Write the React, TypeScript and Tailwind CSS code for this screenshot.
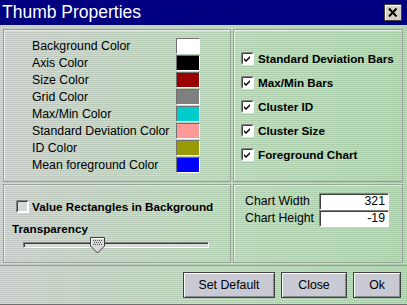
import React from "react";

const font = { fontFamily: '"Liberation Sans", Arial, sans-serif' };

const colors = [
    { label: "Background Color", value: "#ffffff" },
    { label: "Axis Color", value: "#000000" },
    { label: "Size Color", value: "#990000" },
    { label: "Grid Color", value: "#808080" },
    { label: "Max/Min Color", value: "#00cccc" },
    { label: "Standard Deviation Color", value: "#ff9999" },
    { label: "ID Color", value: "#999900" },
    { label: "Mean foreground Color", value: "#0000ff" },
];

const options = [
    "Standard Deviation Bars",
    "Max/Min Bars",
    "Cluster ID",
    "Cluster Size",
    "Foreground Chart",
];

function CheckBox({ checked }: { checked: boolean }) {
    return (
        <svg width="13" height="13" viewBox="0 0 13 13" className="shrink-0">
            <rect x="0" y="0" width="13" height="13" fill="#ffffff" />
            <path d="M0.5 12.5V0.5H12.5" stroke="#808080" fill="none" />
            <path d="M1.5 11.5V1.5H11.5" stroke="#404040" fill="none" />
            <rect x="2" y="2" width="9" height="9" fill={checked ? "#ffffff" : "#d6dad6"} />
            {checked && (
                <path d="M3 6l2 2 4-4v2l-4 4-2-2z" fill="#000000" />
            )}
        </svg>
    );
}

function Panel({ className, children }: { className?: string; children?: React.ReactNode }) {
    return (
        <div className={`border border-[#9aa09a] shadow-[inset_1px_1px_0_#e8ece8] ${className ?? ""}`}>
            {children}
        </div>
    );
}

function Thumb() {
    const dots = [];
    for (let y = 3; y < 9; y += 2) {
        for (let x = 3 + ((y - 3) % 4 === 0 ? 0 : 1); x < 12; x += 2) {
            dots.push(<rect key={`${x}-${y}`} x={x} y={y} width="1" height="1" fill="#505050" />);
        }
    }
    return (
        <svg width="15" height="17" viewBox="0 0 15 17" className="absolute left-[66px] top-[-6px]">
            <path d="M0.5 0.5H14.5V9L7.5 16L0.5 9Z" fill="#d8d8d8" stroke="#404040" />
            <path d="M1.5 9V1.5H13.5" stroke="#ffffff" fill="none" />
            {dots}
        </svg>
    );
}

function Button({ label, w }: { label: string; w: string }) {
    return (
        <button
            className={`${w} h-[26px] bg-[#c9cad4] border border-[#404040] shadow-[inset_1px_1px_0_#ffffff,inset_-1px_-1px_0_#8a8a94] text-[12.3px] text-black`}
            style={font}
        >
            {label}
        </button>
    );
}

export default function App() {
    return (
        <div className="w-[407px] h-[305px] flex flex-col overflow-hidden bg-[#c8ccc8]" style={font}>
            {/* title bar */}
            <div className="h-[25px] bg-[#000080] flex items-center justify-between pl-[2px] pr-[5px]">
                <span className="text-white text-[17.5px] leading-none">Thumb Properties</span>
                <div className="w-[18px] h-[17px] bg-[#d4d0c8] border border-[#404040] shadow-[inset_1px_1px_0_#ffffff] flex items-center justify-center">
                    <svg width="10" height="9" viewBox="0 0 10 9">
                        <path d="M1 0.5L8.5 8.5M8.5 0.5L1 8.5" stroke="#000" strokeWidth="2" />
                    </svg>
                </div>
            </div>

            <div className="flex-1 flex flex-col bg-[image:repeating-linear-gradient(to_bottom,rgba(255,255,255,0.3)_0px,rgba(255,255,255,0.3)_1px,transparent_1px,transparent_2px),linear-gradient(to_right,#c3c7c3_0%,#b2d0b2_55%,#a6cca6_100%)] border-b border-[#707070]">
                <div className="grid grid-cols-[228px_170px] grid-rows-[153px_79px] gap-x-[2px] gap-y-[2px] pl-[3px] pt-[4px]">
                    <Panel className="flex items-center">
                        <div className="grid grid-cols-[144px_24px] gap-y-[1px] pl-[28px] items-center">
                            {colors.map((c) => (
                                <React.Fragment key={c.label}>
                                    <span className="text-[12.3px] leading-[16px] text-black">{c.label}</span>
                                    <div
                                        className="h-[16px] border-t border-l border-[#707070] border-b border-r border-b-white border-r-white"
                                        style={{ backgroundColor: c.value }}
                                    />
                                </React.Fragment>
                            ))}
                        </div>
                    </Panel>

                    <Panel className="flex flex-col justify-center gap-[11px] pl-[7px] pt-[2px]">
                        {options.map((o) => (
                            <div key={o} className="flex items-center gap-[4px] h-[13px]">
                                <CheckBox checked />
                                <span className="text-[11.7px] font-bold text-black leading-none">{o}</span>
                            </div>
                        ))}
                    </Panel>

                    <Panel className="flex flex-col pl-[8px] pt-[15px]">
                        <div className="flex items-center gap-[3px] pl-[4px]">
                            <CheckBox checked={false} />
                            <span className="text-[11.7px] font-bold text-black leading-none">Value Rectangles in Background</span>
                        </div>
                        <span className="mt-[10px] text-[11.7px] font-bold text-black leading-none">Transparency</span>
                        <div className="relative mt-[7px] ml-[11px] w-[186px] h-[6px] border border-t-[#808080] border-l-[#808080] border-b-white border-r-white bg-[#d8dcd8] shadow-[inset_1px_1px_0_#404040]">
                            <Thumb />
                        </div>
                    </Panel>

                    <Panel className="flex flex-col pl-[11px] pt-[8px]">
                        {[
                            ["Chart Width", "321"],
                            ["Chart Height", "-19"],
                        ].map(([l, v]) => (
                            <div key={l} className="flex items-center h-[17px]">
                                <span className="w-[74px] text-[12.3px] text-black">{l}</span>
                                <div className="w-[70px] h-[17px] bg-white border border-t-[#808080] border-l-[#808080] border-b-white border-r-white shadow-[inset_1px_1px_0_#404040] text-right pr-[3px] text-[12.3px] leading-[15px] text-black">
                                    {v}
                                </div>
                            </div>
                        ))}
                    </Panel>
                </div>

                <div className="mt-[2px] h-px bg-[#9aa09a]" />

                <div className="flex justify-end gap-[6px] pr-[6px] pt-[6px]">
                    <Button label="Set Default" w="w-[92px]" />
                    <Button label="Close" w="w-[66px]" />
                    <Button label="Ok" w="w-[48px]" />
                </div>
            </div>
        </div>
    );
}
